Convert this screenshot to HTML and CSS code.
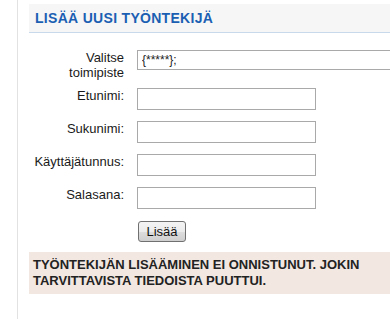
FILE: index.html
```html
<!DOCTYPE html>
<html lang="fi">
<head>
<meta charset="utf-8">
<title>Lisää uusi työntekijä</title>
<link rel="stylesheet" href="styles.css">
</head>
<body>
<div class="page">
  <div class="content">
    <h2 class="title">LISÄÄ UUSI TYÖNTEKIJÄ</h2>
    <form class="form">
      <div class="row row-first">
        <label class="label" for="toimipiste">Valitse toimipiste</label>
        <select class="select" id="toimipiste"><option>{*****};</option></select>
      </div>
      <div class="row">
        <label class="label" for="etunimi">Etunimi:</label>
        <input class="field" id="etunimi" type="text">
      </div>
      <div class="row">
        <label class="label" for="sukunimi">Sukunimi:</label>
        <input class="field" id="sukunimi" type="text">
      </div>
      <div class="row">
        <label class="label" for="tunnus">Käyttäjätunnus:</label>
        <input class="field" id="tunnus" type="text">
      </div>
      <div class="row">
        <label class="label" for="salasana">Salasana:</label>
        <input class="field" id="salasana" type="password">
      </div>
      <div class="row row-button">
        <span class="label"></span>
        <button class="button" type="button">Lisää</button>
      </div>
    </form>
    <div class="error">TYÖNTEKIJÄN LISÄÄMINEN EI ONNISTUNUT. JOKIN TARVITTAVISTA TIEDOISTA PUUTTUI.</div>
  </div>
</div>
</body>
</html>
```

FILE: styles.css
```css
html, body {
  margin: 0;
  padding: 0;
  overflow: hidden;
  background: #ffffff;
}

body {
  font-family: "Liberation Sans", Arial, sans-serif;
  font-size: 13px;
  color: #1a1a1a;
}

.page {
  margin-left: 17px;
  border-left: 1px solid #e2e2e2;
  padding-left: 11px;
  padding-top: 4px;
  min-height: 100vh;
  box-sizing: border-box;
  overflow: hidden;
}

.content {
  width: 400px;
}

.title {
  margin: 0;
  background: #f6f6f6;
  border-bottom: 1px solid #c9d9ec;
  padding: 6px 6px 5px;
  font-size: 14px;
  line-height: 17px;
  font-weight: bold;
  letter-spacing: 0.3px;
  color: #1b5fb3;
}

.form {
  margin: 17px 0 0;
}

.row {
  display: flex;
  align-items: flex-start;
  column-gap: 13px;
  margin-bottom: 11px;
}

.row-first {
  margin-bottom: 8px;
}

.row-button {
  padding-top: 1px;
  margin-bottom: 10px;
}

.label {
  width: 95px;
  flex: none;
  text-align: right;
  line-height: 15px;
  color: #1a1a1a;
}

.select {
  appearance: none;
  -webkit-appearance: none;
  width: 300px;
  height: 20px;
  margin: 0;
  padding: 0 4px;
  border: 1px solid #a9a9a9;
  border-radius: 0;
  background: #ffffff;
  font-family: "Liberation Sans", Arial, sans-serif;
  font-size: 12px;
  color: #222;
  box-sizing: border-box;
}

.field {
  width: 179px;
  height: 22px;
  margin: 0;
  padding: 1px 3px;
  border: 1px solid #a9a9a9;
  border-radius: 0;
  background: #ffffff;
  box-sizing: border-box;
  font-family: "Liberation Sans", Arial, sans-serif;
  font-size: 13px;
}

.button {
  margin: 0 0 0 1px;
  width: 48px;
  height: 21px;
  padding: 0;
  border: 1px solid #707070;
  border-radius: 3px;
  background: linear-gradient(#f4f4f4 0%, #ebebeb 50%, #dddddd 51%, #cfcfcf 100%);
  font-family: "Liberation Sans", Arial, sans-serif;
  font-size: 13px;
  color: #111;
  box-sizing: border-box;
}

.error {
  background: #f2e7e1;
  padding: 5px 4px 5px;
  font-weight: bold;
  font-size: 13px;
  line-height: 16px;
  color: #222222;
}
```
